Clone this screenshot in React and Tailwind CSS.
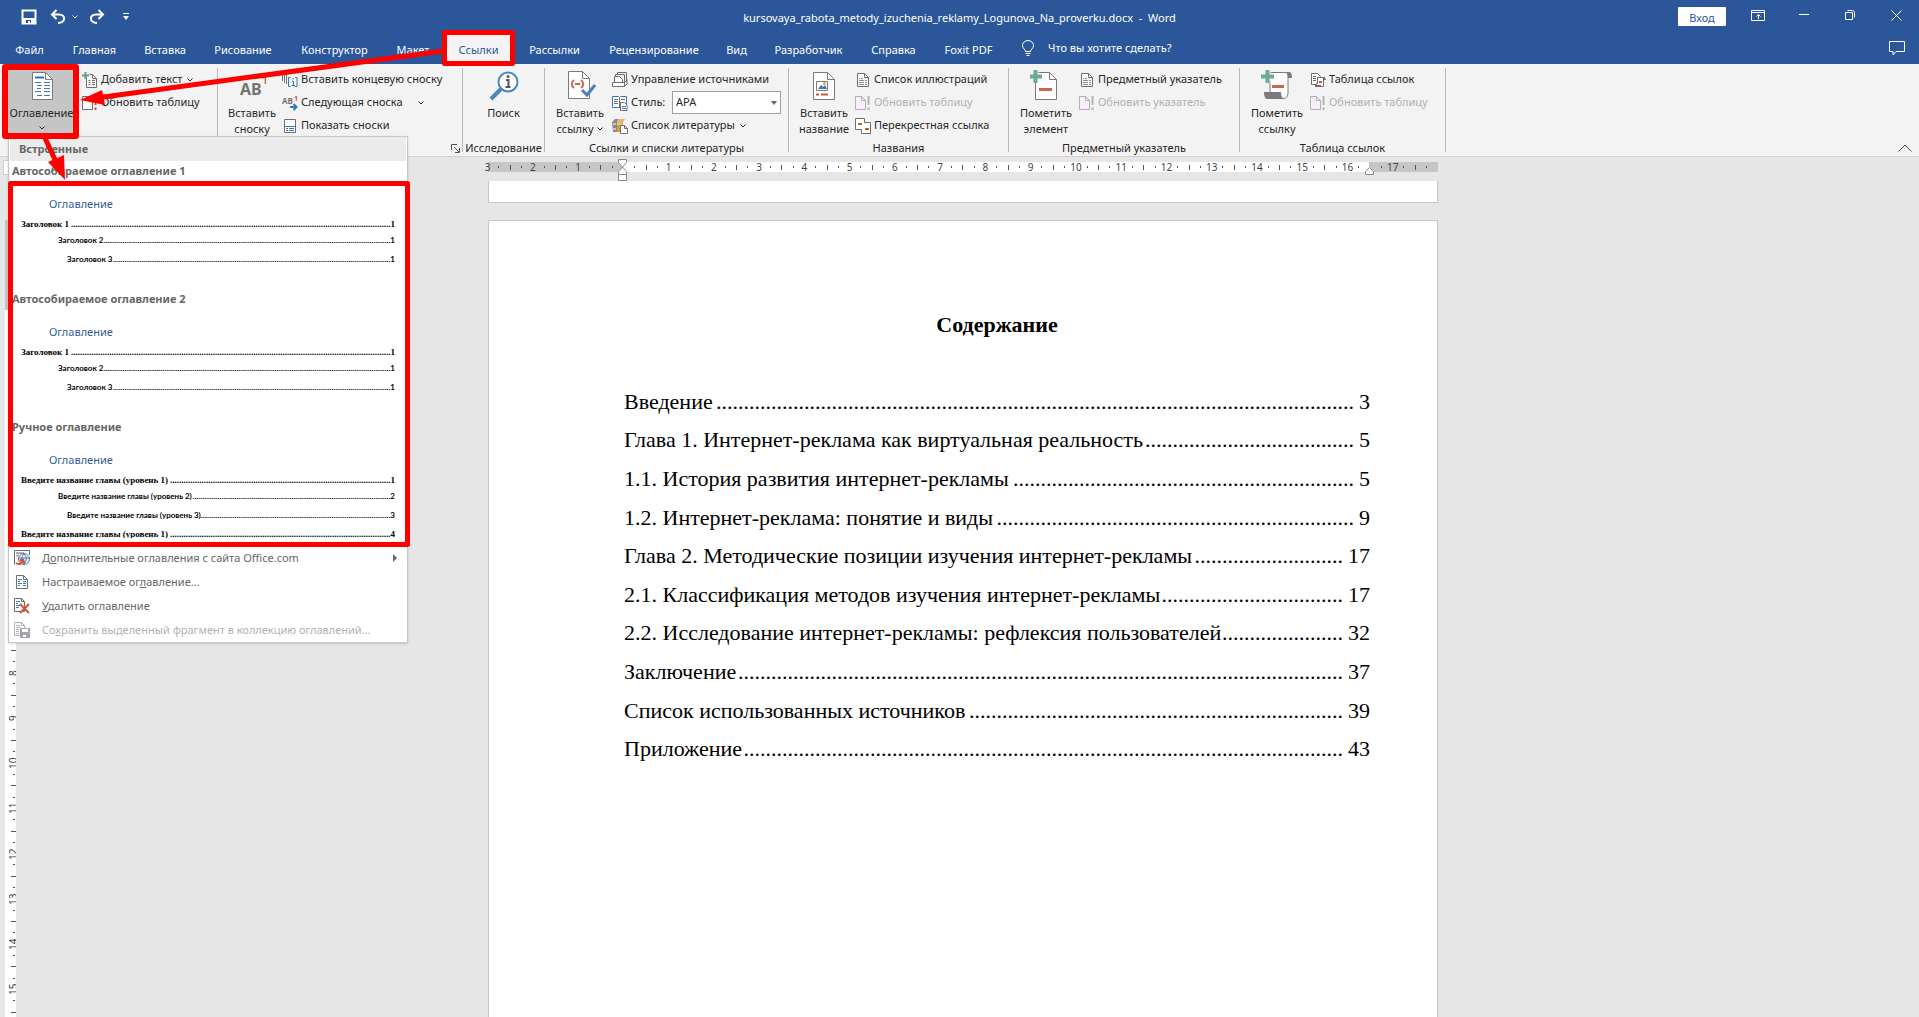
import React, { useLayoutEffect, useRef, useState } from "react";

const TABS = [
  { name: "Файл", width: "w-[59px]" },
  { name: "Главная", width: "w-[71px]" },
  { name: "Вставка", width: "w-[70px]" },
  { name: "Рисование", width: "w-[86px]" },
  { name: "Конструктор", width: "w-[97px]" },
  { name: "Макет", width: "w-[60px]" },
  { name: "Ссылки", width: "w-[71px]" },
  { name: "Рассылки", width: "w-[81px]" },
  { name: "Рецензирование", width: "w-[118px]" },
  { name: "Вид", width: "w-[47px]" },
  { name: "Разработчик", width: "w-[97px]" },
  { name: "Справка", width: "w-[73px]" },
  { name: "Foxit PDF", width: "w-[77px]" },
];

const CONTENTS = [
  { title: "Введение", page: 3 },
  { title: "Глава 1. Интернет-реклама как виртуальная реальность", page: 5 },
  { title: "1.1. История развития интернет-рекламы", page: 5 },
  { title: "1.2. Интернет-реклама: понятие и виды", page: 9 },
  { title: "Глава 2. Методические позиции изучения интернет-рекламы", page: 17 },
  { title: "2.1. Классификация методов изучения интернет-рекламы", page: 17 },
  { title: "2.2. Исследование интернет-рекламы: рефлексия пользователей", page: 32 },
  { title: "Заключение", page: 37 },
  { title: "Список использованных источников", page: 39 },
  { title: "Приложение", page: 43 },
];

const GALLERY = [
  {
    name: "Автособираемое оглавление 1",
    lines: [
      ["Заголовок 1", 1],
      ["Заголовок 2", 1],
      ["Заголовок 3", 1],
    ],
  },
  {
    name: "Автособираемое оглавление 2",
    lines: [
      ["Заголовок 1", 1],
      ["Заголовок 2", 1],
      ["Заголовок 3", 1],
    ],
  },
  {
    name: "Ручное оглавление",
    lines: [
      ["Введите название главы (уровень 1)", 1],
      ["Введите название главы (уровень 2)", 2],
      ["Введите название главы (уровень 3)", 3],
      ["Введите название главы (уровень 1)", 4],
    ],
  },
];

const LINE_STYLES = [
  "mt-[5px] h-4 pl-[11px] font-['Liberation_Serif',serif] text-[9px]",
  "h-[14px] pl-12 font-['Lato','Noto_Sans',sans-serif] text-[8px]",
  "mt-[5px] h-[14px] pl-[57px] font-['Lato','Noto_Sans',sans-serif] text-[8px]",
  "mt-[5px] h-4 pl-[11px] font-['Liberation_Serif',serif] text-[9px]",
];

/* 점선 채우기: 남은 폭만큼 점을 찍는다 */
function Leader({ className = "" }) {
  const boxRef = useRef(null);
  const dotsRef = useRef(null);
  const [count, setCount] = useState(10);

  useLayoutEffect(() => {
    const fill = () => {
      const text = dotsRef.current;
      const dot = text.getBoundingClientRect().width / text.textContent.length;
      setCount(Math.max(1, Math.floor(boxRef.current.clientWidth / dot)));
    };
    fill();
    window.addEventListener("resize", fill);
    return () => window.removeEventListener("resize", fill);
  }, []);

  return (
    <span ref={boxRef} className={`flex w-0 flex-1 justify-end ${className}`} aria-hidden="true">
      <span ref={dotsRef}>{".".repeat(count)}</span>
    </span>
  );
}

/* 아이콘 */
function Icon({ size = 16, children, className = "" }) {
  return (
    <svg
      width={size}
      height={size}
      viewBox={`0 0 ${size} ${size}`}
      fill="none"
      className={`shrink-0 ${className}`}
      aria-hidden="true"
    >
      {children}
    </svg>
  );
}

function Chevron({ className = "" }) {
  return (
    <svg width="6" height="4" viewBox="0 0 6 4" fill="none" className={`shrink-0 ${className}`} aria-hidden="true">
      <path d="M.5.5 3 3 5.5.5" stroke="currentColor" />
    </svg>
  );
}

const DocPage = ({ stroke = "#6e6e6e", fill = "#fff" }) => (
  <>
    <path d="M2.5 1.5h7l4 4v9h-11z" fill={fill} stroke={stroke} />
    <path d="M9.5 1.5v4h4" stroke={stroke} />
  </>
);

const BigPage = () => (
  <>
    <path d="M5.5 2.5h14l7 7v20h-21z" fill="#fff" stroke="#7a7a7a" />
    <path d="M19.5 2.5v7h7" stroke="#7a7a7a" />
  </>
);

const TocIcon = () => (
  <Icon size={32}>
    <path d="M6.5 2.5h13l7 7v20h-20z" fill="#fff" stroke="#7a7a7a" />
    <path d="M19.5 2.5v7h7" stroke="#7a7a7a" />
    <path d="M9 7.5h9" stroke="#2f6db5" strokeWidth="2" />
    <path d="M9 12.5h6M11 15.5h5M11 18.5h4M9 21.5h6M11 25.5h5" stroke="#3b78b8" />
    <path d="M18 12.5h6M18 15.5h6M18 18.5h6M18 21.5h6M18 25.5h6" stroke="#3b78b8" />
  </Icon>
);

const AddTextIcon = () => (
  <Icon>
    <path d="M4.5 5.5v10h10v-9l-4-4h-3" fill="#fff" stroke="#6e6e6e" />
    <path d="M10.5 2.5v4h4" stroke="#6e6e6e" />
    <path d="M3.5 0v7M0 3.5h7" stroke="#5f9e87" strokeWidth="2" />
    <path d="M6.5 8.5h2M10 8.5h3M6.5 10.5h2M10 10.5h3M6.5 12.5h2M10 12.5h3" stroke="#6e6e6e" />
  </Icon>
);

const RefreshIcon = ({ disabled }) => (
  <Icon>
    <path
      d="M.5 1.5h6l4 4v9H.5z"
      fill={disabled ? "#f7effa" : "#fff"}
      stroke={disabled ? "#b4aeb8" : "#6e6e6e"}
    />
    <path d="M6.5 1.5v4h4" stroke={disabled ? "#b4aeb8" : "#6e6e6e"} />
    <path d="M13.5 1v9M13.5 12.5V15" stroke={disabled ? "#b4b4b4" : "#d24726"} strokeWidth="2" />
  </Icon>
);

const FootnoteIcon = () => (
  <svg width="32" height="24" viewBox="0 0 32 24" aria-hidden="true">
    <text x="4" y="21" fontSize="16" fontWeight="700" fill="#737373">
      AB
    </text>
    <text x="26" y="10" fontSize="10" fontWeight="600" fill="#c8593b">
      1
    </text>
  </svg>
);

const EndnoteIcon = () => (
  <Icon>
    <path d="M.5 1v8M2.5 1v10M4.5 1v11" stroke="#737373" />
    <path d="M8.5 5.5h-2v9h2M13 5.5h2v9h-2" stroke="#3b78b8" />
    <path d="M11 6v1.5M10 9.5h1.5v4M9.5 13.5H13" stroke="#3b78b8" />
  </Icon>
);

const NextNoteIcon = () => (
  <svg width="16" height="16" viewBox="0 0 16 16" className="shrink-0" aria-hidden="true">
    <text x="0" y="9" fontSize="8" fontWeight="700" fill="#737373">
      AB
    </text>
    <text x="12" y="6" fontSize="7" fontWeight="700" fill="#c8593b">
      1
    </text>
    <path d="M8 12h6M11.5 9l3 3-3 3" stroke="#3b78b8" strokeWidth="2" fill="none" />
  </svg>
);

const ShowNotesIcon = () => (
  <Icon>
    <path d="M2.5 1.5h11v13h-11z" fill="#fff" stroke="#6e6e6e" />
    <path d="M3 8.5h10" stroke="#3b78b8" />
    <path d="M4 10.5h2M7 10.5h5M4 12.5h2M7 12.5h5" stroke="#3b78b8" />
  </Icon>
);

const SearchIcon = () => (
  <Icon size={32}>
    <circle cx="20" cy="12" r="9.5" fill="#fff" stroke="#4a87bf" strokeWidth="2" />
    <path d="M13 19 3 29" stroke="#4a87bf" strokeWidth="4" />
    <path d="M18 10h2.5v7M17.5 17h5" stroke="#555" strokeWidth="2" />
    <circle cx="20" cy="6.5" r="1.5" fill="#555" />
  </Icon>
);

const CitationIcon = () => (
  <Icon size={32}>
    <path d="M4.5 1.5h14l7 7v20h-21z" fill="#fff" stroke="#7a7a7a" />
    <path d="M18.5 1.5v7h7" stroke="#7a7a7a" />
    <path d="M10 10c-3 2-3 6 0 8M17 10c3 2 3 6 0 8M11 14h5" stroke="#d2674a" strokeWidth="2" />
    <path d="m18 20 5 5 8-10" stroke="#4a80b8" strokeWidth="3" />
  </Icon>
);

const SourcesIcon = () => (
  <Icon>
    <path d="M5.5 3V.5h9v9H13" stroke="#6e6e6e" />
    <path d="M3.5 5V2.5h9v9" stroke="#6e6e6e" />
    <path d="M2.5 10.5v-6h5l3 3v3" fill="#fff" stroke="#6e6e6e" />
    <path d="M.5 10.5h12v4H.5z" fill="#fff" stroke="#6e6e6e" />
    <path d="m13 14 2-2V7" stroke="#6e6e6e" />
  </Icon>
);

const StyleIcon = () => (
  <Icon>
    <path d="M.5 1.5h6l1 1 1-1h6v11H.5z" fill="#fff" stroke="#3b78b8" />
    <path d="M7.5 2v11M2 4.5h4M2 6.5h4M2 8.5h4M9 4.5h4" stroke="#6e6e6e" />
    <path d="M8.5 7.5h4L15 10v5.5H8.5z" fill="#fff" stroke="#6e6e6e" />
    <path d="M10 11.5h4M10 13.5h4" stroke="#3b78b8" />
  </Icon>
);

const BibliographyIcon = () => (
  <Icon>
    <path d="m0 4 3-3h4L5 4v10H1z" fill="#8a8a8a" />
    <path d="m5 4 3-3h5l-2 3v4H5z" fill="#e5b567" />
    <path d="M5 5h3v9H5z" fill="#d99b3a" />
    <path d="M1 6h3M1 11h3M5 6h3" stroke="#fff" />
    <path d="M8.5 7.5h4l3 3v5h-7z" fill="#fff" stroke="#6e6e6e" />
    <path d="M12.5 7.5v3h3" stroke="#6e6e6e" />
  </Icon>
);

const CaptionIcon = () => (
  <Icon size={32}>
    <BigPage />
    <path d="M8.5 11.5h11v9h-11z" fill="#fff" stroke="#7a7a7a" />
    <path d="m10 19 3-4 2 2 2-2 2 4z" fill="#3b78b8" />
    <circle cx="16.5" cy="13.5" r="1.5" fill="#e5a93f" />
    <path d="M8 24.5h3M13 24.5h7" stroke="#c8593b" strokeWidth="2" />
  </Icon>
);

const ListPageIcon = () => (
  <Icon>
    <DocPage />
    <path d="M4 6.5h1M6 6.5h2M4 8.5h5M10 8.5h2M4 10.5h5M10 10.5h2M4 12.5h5M10 12.5h2" stroke="#8c8c8c" />
  </Icon>
);

const CrossRefIcon = () => (
  <Icon>
    <path d="M.5.5h9v11h-9z" fill="#fff" stroke="#6e6e6e" />
    <path d="M9.5 4.5h6v11h-9v-4" fill="#fff" stroke="#6e6e6e" />
    <path d="M3 6h4M10 11h4" stroke="#c8593b" strokeWidth="2" />
  </Icon>
);

const MarkEntryIcon = () => (
  <Icon size={32}>
    <BigPage />
    <path d="M5.5 1v12M0 7h11" stroke="#f3f3f3" strokeWidth="6" />
    <path d="M5.5 0v13M-1 6.5h13" stroke="#6fa896" strokeWidth="4" />
    <path d="M9 19.5h13" stroke="#c8674c" strokeWidth="3" />
  </Icon>
);

const MarkCitationIcon = () => (
  <Icon size={32}>
    <path d="M9 2.5h18v20c0 4-2 6-5 6H9z" fill="#fff" stroke="#7a7a7a" />
    <path d="M24 2h4c2 0 3 2 3 6h-4c0-3-1-5-3-6z" fill="#7a7a7a" />
    <path d="M3 22h17c0 4 1 6 3 7H6c-2 0-3-3-3-7z" fill="#7a7a7a" />
    <path d="M6.5 1v12M1 7h11" stroke="#f3f3f3" strokeWidth="6" />
    <path d="M6.5 0v13M0 6.5h13" stroke="#6fa896" strokeWidth="4" />
    <path d="M11 16.5h12" stroke="#c8674c" strokeWidth="3" />
  </Icon>
);

const AuthoritiesIcon = () => (
  <Icon>
    <path d="M1.5 1.5h6l3 3v8h-9z" fill="#fff" stroke="#6e6e6e" />
    <path d="M3 4.5h3M3 6.5h3M3 8.5h3" stroke="#6e6e6e" />
    <path d="M7.5 5.5h7l1 2h-2v7h-7v-3h1z" fill="#fff" stroke="#6e6e6e" />
    <path d="M5 13h6v2H5zM13 5h2v3h-2z" fill="#6e6e6e" />
    <path d="M9 10h3" stroke="#c8593b" strokeWidth="2" />
  </Icon>
);

const OfficeTocIcon = () => (
  <Icon>
    <path d="M.5 14.5V.5h15V5" stroke="#6e6e6e" />
    <path d="M2 3h8M2 5.5h3" stroke="#b0b0b0" strokeWidth="2" />
    <circle cx="10" cy="9" r="5.5" fill="#eaf2fa" stroke="#4a80b8" />
    <path d="M5 8h10M10 4c-3 3-3 7 0 10M10 4c3 3 3 7 0 10" stroke="#4a80b8" />
    <path d="M2 13c3 2 6 1 7-3M5.5 10.5 9 9.5l1.500 3.500" stroke="#d9532c" strokeWidth="2" />
  </Icon>
);

const CustomTocIcon = () => (
  <Icon>
    <DocPage />
    <path d="M4 5.5h4M4 7.5h2M4 9.5h4M4 11.5h2M9 7.5h3M9 9.5h3M9 11.5h3" stroke="#3b78b8" />
  </Icon>
);

const RemoveTocIcon = () => (
  <Icon>
    <path d="M.5.5h7l3 3v10H.5z" fill="#fff" stroke="#6e6e6e" />
    <path d="M7.5.5v3h3" stroke="#6e6e6e" />
    <path d="M2 3.5h4M2 5.5h2M2 7.5h4M2 9.5h3" stroke="#3b78b8" />
    <path d="m6 6 9 9M15 6l-9 9" stroke="#d0573a" strokeWidth="2" />
  </Icon>
);

const SaveTocIcon = () => (
  <Icon>
    <path d="M.5.5h7l3 3v10H.5z" fill="#fff" stroke="#b4aeb8" />
    <path d="M7.5.5v3h3M2 3.5h4M2 5.5h4M2 7.5h3M2 9.5h3M2 11.5h3" stroke="#b4aeb8" />
    <path d="M6 6h10v10H6z" fill="#a8a4ab" />
    <path d="M8 7h6v3H8zM9 13h3v2H9z" fill="#fff" />
  </Icon>
);

/* 제목 표시줄 */
function TitleBar() {
  return (
    <div className="grid h-[33px] grid-cols-[1fr_auto_1fr] items-center">
      <div className="flex items-center pl-[21px]">
        <button aria-label="Сохранить">
          <Icon>
            <path d="M1.5 1.5h13v13h-13z" stroke="#fff" strokeWidth="2" />
            <path d="M2 9h12v5H2z" fill="#fff" />
            <path d="M5 11h5v3H5z" fill="#2b579a" />
            <path d="M7 12h2v2H7z" fill="#fff" />
          </Icon>
        </button>
        <button aria-label="Отменить" className="ml-[13px]">
          <Icon>
            <path d="M2 5.5h7c7 0 7 8-1 8.5M6.5 1 2 5.5 6.5 10" stroke="#fff" strokeWidth="2" />
          </Icon>
        </button>
        <button aria-label="Список отмены" className="ml-[6px]">
          <Chevron />
        </button>
        <button aria-label="Вернуть" className="ml-[11px]">
          <Icon>
            <path d="M14 5.5H7c-7 0-7 8 1 8.5M9.5 1 14 5.5 9.5 10" stroke="#fff" strokeWidth="2" />
          </Icon>
        </button>
        <button aria-label="Настройка панели быстрого доступа" className="ml-[18px]">
          <svg width="6" height="7" viewBox="0 0 6 7" aria-hidden="true">
            <path d="M0 0h6v1H0zM0 3h6L3 7z" fill="#fff" />
          </svg>
        </button>
      </div>
      <div className="pt-1">
        kursovaya_rabota_metody_izuchenia_reklamy_Logunova_Na_proverku.docx&nbsp; - &nbsp;Word
      </div>
      <div className="flex items-center justify-end self-start">
        <button className="mt-[3px] mr-[9px] h-[19px] w-12 rounded-[1px] bg-white leading-[21px] text-[#2b579a]">
          Вход
        </button>
        <button aria-label="Параметры ленты" className="flex h-[30px] w-[46px] items-center justify-center">
          <svg width="14" height="11" viewBox="0 0 14 11" fill="none" aria-hidden="true">
            <path d="M.5.5h13v10H.5zM.5 2.5h13M7.5 9V4.5M5.5 6.5l2-2 2 2" stroke="#fff" />
          </svg>
        </button>
        <button aria-label="Свернуть" className="flex h-[30px] w-[46px] items-center justify-center">
          <svg width="10" height="2" viewBox="0 0 10 2" aria-hidden="true">
            <path d="M0 0h10v1H0z" fill="#fff" />
          </svg>
        </button>
        <button aria-label="Свернуть в окно" className="flex h-[30px] w-[46px] items-center justify-center">
          <svg width="10" height="10" viewBox="0 0 10 10" fill="none" aria-hidden="true">
            <path d="M.5 2.5h7v7h-7zM2.5.5h5c1 0 2 1 2 2v5" stroke="#fff" />
          </svg>
        </button>
        <button aria-label="Закрыть" className="flex h-[30px] w-[46px] items-center justify-center">
          <svg width="11" height="11" viewBox="0 0 11 11" fill="none" aria-hidden="true">
            <path d="m.5.5 10 10M10.5.5l-10 10" stroke="#fff" />
          </svg>
        </button>
      </div>
    </div>
  );
}

/* 리본 탭 */
function RibbonTabs({ active, onChange }) {
  return (
    <div className="flex h-[31px] items-stretch">
      <nav className="flex">
        {TABS.map((t) => (
          <button
            key={t.name}
            onClick={() => onChange(t.name)}
            className={`${t.width} whitespace-nowrap pt-1 ${
              active === t.name ? "bg-[#f3f3f3] text-[#2b579a]" : "text-white"
            }`}
          >
            {t.name}
          </button>
        ))}
      </nav>
      <button className="flex items-center gap-[14px] pl-[15px]">
        <svg width="12" height="17" viewBox="0 0 12 17" fill="none" aria-hidden="true">
          <path d="M3.5 11.5c0-2-3-3-3-6a5.5 5 0 0 1 11 0c0 3-3 4-3 6zM3.5 13.5h5M4.5 15.5h3" stroke="#fff" />
        </svg>
        Что вы хотите сделать?
      </button>
      <button aria-label="Примечания" className="ml-auto pr-[14px]">
        <svg width="16" height="15" viewBox="0 0 16 15" fill="none" aria-hidden="true">
          <path d="M.5.5h15v10H7L4 14v-3.5H.5z" stroke="#fff" />
        </svg>
      </button>
    </div>
  );
}

function BigButton({ icon, lines, arrow, className = "" }) {
  return (
    <button className={`flex h-[73px] w-14 shrink-0 flex-col items-center pt-1 leading-4 ${className}`}>
      <span className="mb-px flex h-9 items-center">{icon}</span>
      {lines.map((line, i) => (
        <span key={line} className="flex items-center gap-1 whitespace-nowrap">
          {line}
          {arrow && i === lines.length - 1 && <Chevron />}
        </span>
      ))}
    </button>
  );
}

function SmallButton({ icon, children, arrow, disabled }) {
  return (
    <button
      disabled={disabled}
      className="flex h-[23px] items-center gap-[3px] whitespace-nowrap disabled:text-[#b1b1b1]"
    >
      {icon}
      {children}
      {arrow && <Chevron className={arrow} />}
    </button>
  );
}

function Group({ label, width, children, launcher }) {
  return (
    <section className={`${width} flex shrink-0`}>
      <div className="flex min-w-0 flex-1 flex-col">
        <div className="flex h-[76px]">{children}</div>
        <div className="flex h-4 items-center justify-center whitespace-nowrap">
          {label}
          {launcher && (
            <button aria-label="Параметры сносок" className="mr-[2px] ml-auto">
              <svg width="9" height="9" viewBox="0 0 9 9" fill="none" aria-hidden="true">
                <path d="M.5 6V.5H6M3 3l5 5M8.5 4v4.5H4" stroke="#555" />
              </svg>
            </button>
          )}
        </div>
      </div>
      <div className="my-1 w-px bg-[#b8b8b8]" />
    </section>
  );
}

function Ribbon() {
  const [style, setStyle] = useState("APA");

  return (
    <div className="flex h-[93px] border-b border-[#d2d2d2] bg-[#f3f3f3] text-[#262626]">
      <Group width="w-[218px]" label="">
        <button className="ml-2 flex h-[73px] w-[67px] shrink-0 flex-col items-center bg-[#c5c5c5] pt-1 leading-4">
          <span className="mb-px flex h-9 items-center">
            <TocIcon />
          </span>
          <span className="whitespace-nowrap">Оглавление</span>
          <Chevron className="mt-[5px]" />
        </button>
        <div className="ml-[7px] pt-1">
          <SmallButton icon={<AddTextIcon />} arrow="ml-[2px]">Добавить текст</SmallButton>
          <SmallButton icon={<RefreshIcon />}>Обновить таблицу</SmallButton>
        </div>
      </Group>

      <Group width="w-[245px]" label="" launcher>
        <BigButton icon={<FootnoteIcon />} lines={["Вставить", "сноску"]} className="ml-[6px]" />
        <div className="ml-[2px] pt-1">
          <SmallButton icon={<EndnoteIcon />}>Вставить концевую сноску</SmallButton>
          <SmallButton icon={<NextNoteIcon />} arrow="ml-3">Следующая сноска</SmallButton>
          <SmallButton icon={<ShowNotesIcon />}>Показать сноски</SmallButton>
        </div>
      </Group>

      <Group width="w-[82px]" label="Исследование">
        <BigButton icon={<SearchIcon />} lines={["Поиск"]} className="mx-auto" />
      </Group>

      <Group width="w-[244px]" label="Ссылки и списки литературы">
        <BigButton icon={<CitationIcon />} lines={["Вставить", "ссылку"]} arrow className="ml-[7px]" />
        <div className="ml-1 pt-1">
          <SmallButton icon={<SourcesIcon />}>Управление источниками</SmallButton>
          <div className="flex h-[23px] items-center gap-[3px]">
            <StyleIcon />
            <label htmlFor="citation-style" className="w-[38px]">
              Стиль:
            </label>
            <div className="relative">
              <select
                id="citation-style"
                value={style}
                onChange={(e) => setStyle(e.target.value)}
                className="h-[23px] w-[109px] appearance-none border border-[#a0a0a0] bg-white px-[3px]"
              >
                <option value="APA">APA</option>
                <option value="MLA">MLA</option>
              </select>
              <svg
                width="6"
                height="4"
                viewBox="0 0 6 4"
                className="pointer-events-none absolute top-[10px] right-1"
                aria-hidden="true"
              >
                <path d="M0 0h6L3 4z" fill="#666" />
              </svg>
            </div>
          </div>
          <SmallButton icon={<BibliographyIcon />} arrow="ml-[2px]">Список литературы</SmallButton>
        </div>
      </Group>

      <Group width="w-[220px]" label="Названия">
        <BigButton icon={<CaptionIcon />} lines={["Вставить", "название"]} className="ml-[7px]" />
        <div className="ml-[3px] pt-1">
          <SmallButton icon={<ListPageIcon />}>Список иллюстраций</SmallButton>
          <SmallButton icon={<RefreshIcon disabled />} disabled>Обновить таблицу</SmallButton>
          <SmallButton icon={<CrossRefIcon />}>Перекрестная ссылка</SmallButton>
        </div>
      </Group>

      <Group width="w-[231px]" label="Предметный указатель">
        <BigButton icon={<MarkEntryIcon />} lines={["Пометить", "элемент"]} className="ml-[9px]" />
        <div className="ml-[5px] pt-1">
          <SmallButton icon={<ListPageIcon />}>Предметный указатель</SmallButton>
          <SmallButton icon={<RefreshIcon disabled />} disabled>Обновить указатель</SmallButton>
        </div>
      </Group>

      <Group width="w-[206px]" label="Таблица ссылок">
        <BigButton icon={<MarkCitationIcon />} lines={["Пометить", "ссылку"]} className="ml-[9px]" />
        <div className="ml-[5px] pt-1">
          <SmallButton icon={<AuthoritiesIcon />}>Таблица ссылок</SmallButton>
          <SmallButton icon={<RefreshIcon disabled />} disabled>Обновить таблицу</SmallButton>
        </div>
      </Group>

      <button aria-label="Свернуть ленту" className="mt-auto mr-[7px] mb-1 ml-auto">
        <svg width="14" height="8" viewBox="0 0 14 8" fill="none" aria-hidden="true">
          <path d="M.5 7.5 7 1l6.5 6.5" stroke="#444" />
        </svg>
      </button>
    </div>
  );
}

/* 가로 눈금자: 0.25cm 간격 */
function HorizontalRuler() {
  const marks = Array.from({ length: 85 }, (_, i) => i - 12);

  return (
    <div className="relative h-[10px] bg-[linear-gradient(to_right,#c6c6c6_0_134px,#fff_134px_881px,#c6c6c6_881px)]">
      <div className="-mx-[6px] flex h-full items-center text-[10px] text-[#444]">
        {marks.map((m) => (
          <span key={m} className="flex w-0 flex-1 items-center justify-center">
            {m % 4 === 0 ? (
              m !== 0 && m !== 72 && Math.abs(m) / 4
            ) : m === 66 ? null : m % 2 === 0 ? (
              <i className="h-[5px] w-px bg-[#555]" />
            ) : (
              <i className="h-[2px] w-px bg-[#555]" />
            )}
          </span>
        ))}
      </div>
      <svg width="9" height="22" viewBox="0 0 9 22" className="absolute -top-[3px] left-[130px]" aria-hidden="true">
        <path d="M.5.5h8v3L4.5 8l-4-4.5zM.5 15.5v-3l4-4.5 4 4.5v3zM.5 15.5h8v6h-8z" fill="#fff" stroke="#888" />
      </svg>
      <svg width="9" height="8" viewBox="0 0 9 8" className="absolute top-[5px] left-[877px]" aria-hidden="true">
        <path d="M.5 7.5v-3l4-4 4 4v3z" fill="#fff" stroke="#888" />
      </svg>
    </div>
  );
}

/* 세로 눈금자 */
function VerticalRuler() {
  const cms = Array.from({ length: 16 }, (_, i) => i);

  return (
    <div className="h-full w-[11px] overflow-hidden bg-white text-[10px] text-[#444]">
      <div className="h-[90px] bg-[#c6c6c6]" />
      <div className="-mt-[5px] grid h-[724px] auto-rows-fr pl-[3px]">
        {cms.map((cm) => (
          <div key={cm} className="grid auto-rows-fr place-items-center">
            <span className="h-0 rotate-180 leading-[11px] [writing-mode:vertical-rl]">
              <span className="flex h-0 items-center justify-center">{cm > 0 && cm}</span>
            </span>
            <i className="h-px w-[2px] bg-[#555]" />
            <i className="h-px w-[5px] bg-[#555]" />
            <i className="h-px w-[2px] bg-[#555]" />
          </div>
        ))}
      </div>
    </div>
  );
}

function DocumentPage() {
  return (
    <article className="flex-1 border border-b-0 border-[#c6c6c6] bg-white pr-[67px] pl-[135px] font-['Liberation_Serif','Times_New_Roman',serif] text-[22px] text-black">
      <h1 className="pt-[88px] text-center leading-8 font-bold">Содержание</h1>
      <ol className="mt-[41px] grid h-[386px] auto-rows-fr">
        {CONTENTS.map((row) => (
          <li key={row.title} className="flex items-center whitespace-nowrap">
            <span>{row.title}</span>
            <Leader className="mr-[5px] ml-px" />
            <span>{row.page}</span>
          </li>
        ))}
      </ol>
    </article>
  );
}

/* 목차 드롭다운 메뉴 */
function TocMenu() {
  return (
    <div className="absolute top-[136px] left-2 w-[400px] border border-[#c6c6c6] bg-white text-[#666] shadow-sm">
      <div className="mx-px h-6 bg-[#ebebeb] pl-[9px] leading-6 font-bold">Встроенные</div>
      <div className="h-[385px]">
        {GALLERY.map((item) => (
          <button key={item.name} className="flex h-32 w-full flex-col items-stretch justify-start text-left">
            <span className="h-5 pl-[3px] leading-5 font-bold">{item.name}</span>
            <span className="block h-[101px] overflow-hidden pt-[15px] pr-3 pl-px">
              <span className="block h-4 pl-[39px] leading-4 text-[#2f5c8f]">Оглавление</span>
              {item.lines.map(([text, page], i) => (
                <span
                  key={i}
                  className={`flex items-center font-bold whitespace-nowrap text-black ${LINE_STYLES[i]}`}
                >
                  <span>{text}</span>
                  <Leader />
                  <span>{page}</span>
                </span>
              ))}
            </span>
          </button>
        ))}
      </div>
      <div>
        <button className="flex h-6 w-full items-center gap-3 pr-[10px] pl-[5px]">
          <OfficeTocIcon />
          <span>
            Д<u>о</u>полнительные оглавления с сайта Office.com
          </span>
          <svg width="4" height="8" viewBox="0 0 4 8" className="ml-auto" aria-hidden="true">
            <path d="M0 0v8l4-4z" fill="#666" />
          </svg>
        </button>
        <button className="flex h-6 w-full items-center gap-3 pl-[5px]">
          <CustomTocIcon />
          <span>
            Настраиваемое ог<u>л</u>авление...
          </span>
        </button>
        <button className="flex h-6 w-full items-center gap-3 pl-[5px]">
          <RemoveTocIcon />
          <span>
            <u>У</u>далить оглавление
          </span>
        </button>
        <button disabled className="flex h-6 w-full items-center gap-3 pl-[5px] whitespace-nowrap text-[#b1b1b1]">
          <SaveTocIcon />
          <span>
            Со<u>х</u>ранить выделенный фрагмент в коллекцию оглавлений...
          </span>
        </button>
      </div>
    </div>
  );
}

/* 빨간 표시 (테두리, 화살표) */
function Annotations() {
  return (
    <svg
      width="520"
      height="560"
      viewBox="0 0 520 560"
      fill="none"
      className="pointer-events-none absolute top-0 left-0"
      aria-hidden="true"
    >
      <g stroke="#fe0000" strokeLinejoin="round">
        <path d="M5 67h71v69H5z" strokeWidth="6" />
        <path d="M444.5 32.5h68v31h-68z" strokeWidth="5" />
        <path d="M10.5 183.5h397v361h-397z" strokeWidth="5" />
        <path d="M443 51 100 97.5M45 138l11 24" strokeWidth="5" />
      </g>
      <path d="m80 100 22-10 3 15zM65 180l-17-18 16-7z" fill="#fe0000" />
    </svg>
  );
}

function App() {
  const [activeTab, setActiveTab] = useState("Ссылки");

  return (
    <div className="relative flex h-screen flex-col overflow-hidden bg-[#e6e6e6] font-['Noto_Sans','Open_Sans',sans-serif] text-[11px]">
      <header className="shrink-0 bg-[#2b579a] text-white">
        <TitleBar />
        <RibbonTabs active={activeTab} onChange={setActiveTab} />
      </header>
      <Ribbon />

      <main className="flex min-h-0 flex-1">
        <div className="flex w-4 shrink-0 flex-col items-end pt-[3px]">
          <div className="mb-[45px] h-[15px] w-[13px] shrink-0 border border-[#d2d2d2] bg-white" />
          <VerticalRuler />
        </div>
        <div className="flex flex-1 justify-center pr-[9px]">
          <div className="flex w-[950px] flex-col pt-[5px]">
            <HorizontalRuler />
            <div className="mt-[9px] h-[22px] shrink-0 border border-t-0 border-[#c6c6c6] bg-white" />
            <div className="h-[17px] shrink-0" />
            <DocumentPage />
          </div>
        </div>
      </main>

      <TocMenu />
      <Annotations />
    </div>
  );
}

export default App;
